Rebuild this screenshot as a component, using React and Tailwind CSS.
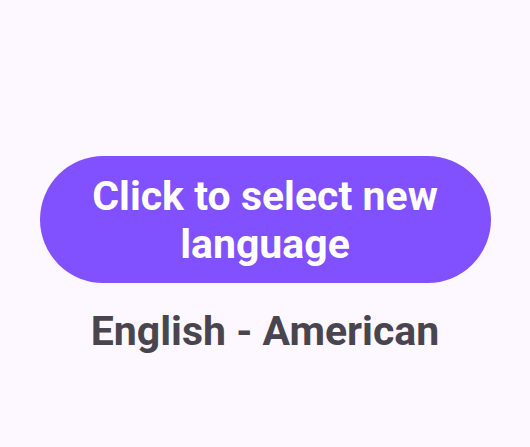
export default function App() {
  return (
    <div className="w-[530px] h-[447px] bg-[#fdf7ff] flex flex-col items-center pt-[156px]" style={{ fontFamily: 'Roboto, sans-serif' }}>
      <button className="w-[451px] h-[127px] rounded-full bg-[#8150ff] text-white font-bold text-[41px] leading-[48px] flex items-center justify-center text-center px-6">
        Click to select new language
      </button>
      <div className="mt-[24px] text-[41px] leading-[48px] font-bold text-[#49454f]">English - American</div>
    </div>
  );
}
